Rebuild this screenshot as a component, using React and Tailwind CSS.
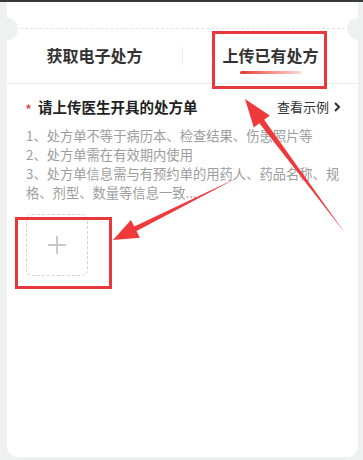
import React from 'react';

const lines = [
  '1、处方单不等于病历本、检查结果、伤患照片等',
  '2、处方单需在有效期内使用',
  '3、处方单信息需与有预约单的用药人、药品名称、规格、剂型、数量等信息一致...',
];

const Tab = ({ label, active }) => (
  <div className="flex-1 flex flex-col items-center">
    <div className="text-[16px] leading-[22px] font-bold text-[#333]">{label}</div>
    {active ? (
      <div className="mt-[5px] w-[61px] h-[3px] rounded-full bg-gradient-to-r from-[#e2332b] to-[#fbd6d6]" />
    ) : (
      <div className="mt-[5px] h-[3px]" />
    )}
  </div>
);

const Annotations = () => (
  <svg className="absolute inset-0 pointer-events-none" width="363" height="460" viewBox="0 0 363 460">
    <rect x="213.5" y="32.5" width="112" height="55" fill="none" stroke="#e8383d" strokeWidth="3" />
    <rect x="16.5" y="218.5" width="94" height="69" fill="none" stroke="#e8383d" strokeWidth="3" />
    <polygon
      points="237,178 136.5,231 139.9,237.7 113,240 130.9,219.9 134.3,226.6"
      fill="#ee3a3a"
    />
    <polygon
      points="345,233 264.2,119.7 269.8,115.5 245,99 253.8,127.5 259.4,123.3"
      fill="#ee3a3a"
    />
  </svg>
);

export default function App() {
  return (
    <div
      className="relative w-[363px] h-[460px] overflow-hidden bg-[#eff1f0]"
      style={{ fontFamily: '"Noto Sans CJK SC", "Noto Sans", sans-serif' }}
    >
      <div className="h-[2px] bg-[#3a3a3a]" />
      <div className="relative ml-[7px] w-[351px] h-[455px] bg-white rounded-b-[10px] overflow-hidden">
        {/* ticket notches */}
        <div className="absolute left-[-11px] top-[16px] w-[22px] h-[22px] rounded-full bg-[#eff1f0]" />
        <div className="absolute right-[-11px] top-[16px] w-[22px] h-[22px] rounded-full bg-[#eff1f0]" />

        <div className="pt-[26px] px-[13px]">
          <div className="border-t-[1.5px] border-dashed border-[#e4e4e4]" />
        </div>

        <div className="flex items-start pt-[15px] h-[55px] border-b border-[#eeeeee]">
          <Tab label="获取电子处方" />
          <div className="w-px h-[18px] mt-[3px] bg-[#ececec]" />
          <Tab label="上传已有处方" active />
        </div>

        <div className="pl-[18px] pr-[18px] pt-[12px]">
          <div className="flex items-center justify-between h-[22px]">
            <div className="flex items-center">
              <span className="text-[#e53935] text-[15px] leading-none mt-[5px] w-[13px]">*</span>
              <span className="text-[14.5px] font-bold text-[#222]">请上传医生开具的处方单</span>
            </div>
            <div className="flex items-center gap-[5px] text-[13px] text-[#333]">
              <span>查看示例</span>
              <svg width="6" height="10" viewBox="0 0 6 10">
                <path d="M1 1l4 4-4 4" fill="none" stroke="#333" strokeWidth="2" />
              </svg>
            </div>
          </div>

          <div className="mt-[8px] pl-px text-[13.3px] leading-[19px] text-[#9d9d9d]">
            {lines.map((l) => (
              <div key={l}>{l}</div>
            ))}
          </div>

          <div className="mt-[12px] ml-px w-[62px] h-[62px] rounded-[6px] border border-dashed border-[#d2d2d2] flex items-center justify-center">
            <svg width="18" height="18" viewBox="0 0 18 18">
              <path d="M9 0v18M0 9h18" stroke="#c9c9c9" strokeWidth="2" />
            </svg>
          </div>
        </div>
      </div>
      <Annotations />
    </div>
  );
}
